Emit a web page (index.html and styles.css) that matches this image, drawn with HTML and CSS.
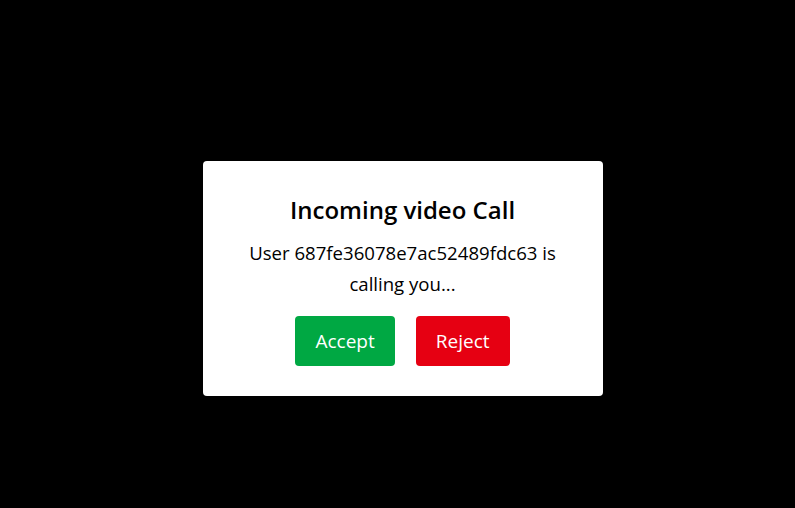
FILE: index.html
```html
<!DOCTYPE html>
<html>
<head>
<meta charset="utf-8">
<link rel="stylesheet" href="styles.css">
</head>
<body>
<div class="overlay">
  <div class="modal">
    <h2 class="title">Incoming video Call</h2>
    <p class="message">User 687fe36078e7ac52489fdc63 is calling you...</p>
    <div class="actions">
      <button class="btn btn-accept">Accept</button>
      <button class="btn btn-reject">Reject</button>
    </div>
  </div>
</div>
</body>
</html>
```

FILE: styles.css
```css
html, body {
  margin: 0;
  height: 100%;
  background: #000;
}
.overlay {
  height: 100%;
  box-sizing: border-box;
  display: flex;
  justify-content: center;
  align-items: flex-start;
  padding-top: 161px;
  padding-left: 10px;
  font-family: "Open Sans", "Noto Sans", sans-serif;
}
.modal {
  width: 400px;
  box-sizing: border-box;
  background: #fff;
  border-radius: 4px;
  padding: 30px 40px 30px;
  text-align: center;
  color: #000;
}
.title {
  margin: 0 0 8px;
  font-size: 24px;
  font-weight: 600;
  line-height: 38px;
}
.message {
  margin: 0 0 17px;
  font-size: 18.6px;
  line-height: 31px;
}
.actions {
  display: flex;
  justify-content: center;
  gap: 21px;
}
.btn {
  border: none;
  border-radius: 4px;
  color: #fff;
  font-family: inherit;
  font-size: 19px;
  height: 50px;
  padding: 0 20px;
}
.btn-accept { background: #00a843; }
.btn-reject { background: #e60012; }
```
